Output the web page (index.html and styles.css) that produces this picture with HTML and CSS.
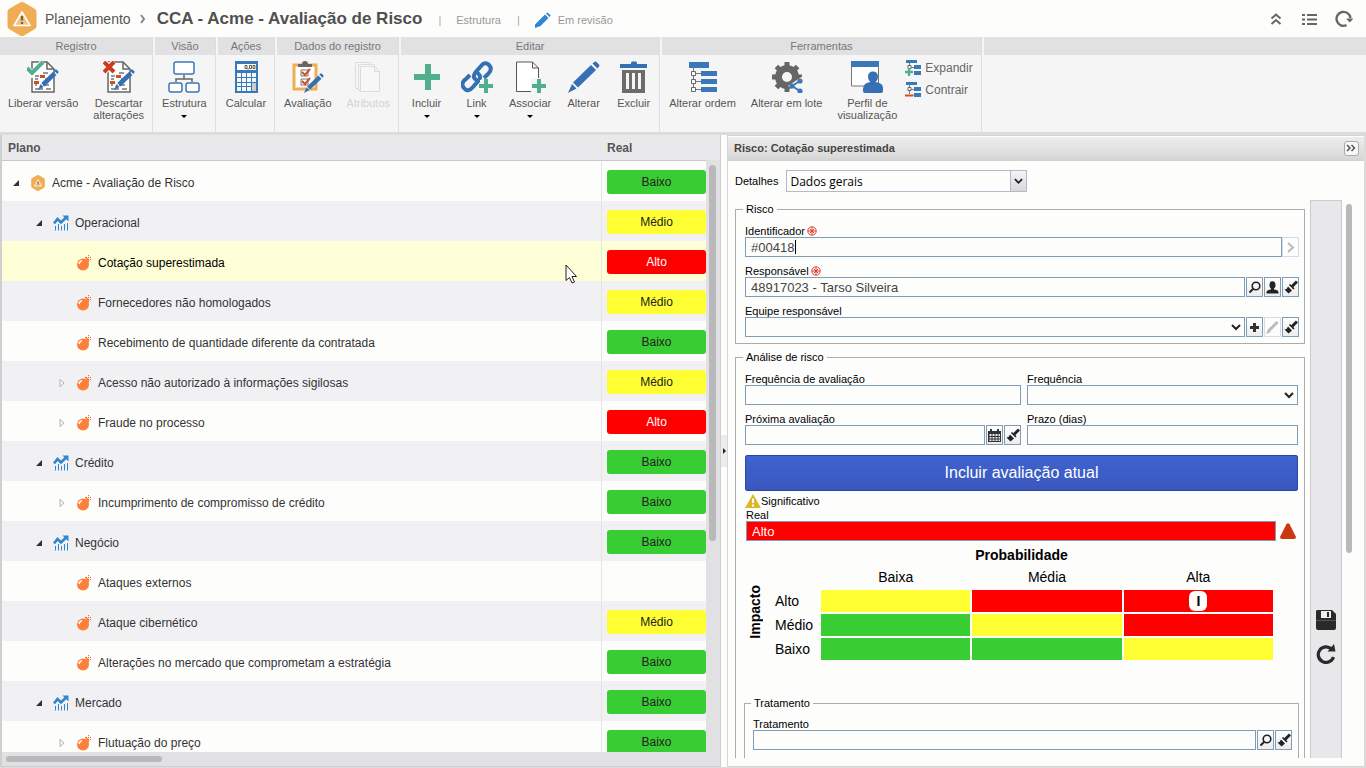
FILE: index.html
```html
<!DOCTYPE html>
<html lang="pt-BR">
<head>
<meta charset="utf-8">
<title>CCA - Acme - Avaliação de Risco</title>
<link rel="stylesheet" href="styles.css">
</head>
<body>
<svg class="defs" aria-hidden="true">
  <symbol id="hex" viewBox="0 0 30 34"><path d="M13 .6Q15 -.4 17 .6L28 7Q29.500 8 29.500 10V24Q29.500 26 28 27L17 33.400Q15 34.400 13 33.400L2 27Q.5 26 .5 24V10Q.5 8 2 7Z" fill="#efae55"/><path d="M15 10 23 23.500H7Z" fill="#f3c27e" stroke="#fff" stroke-width="1.600" stroke-linejoin="round"/><path d="M15 14v4.500M15 20v2" stroke="#7b6230" stroke-width="2.200"/></symbol>
  <symbol id="chart" viewBox="0 0 16 16"><path d="M1 8.500 4.500 4 8 7.500 13 2.500" fill="none" stroke="#2f86d0" stroke-width="2.600"/><path d="M9.500 .5H15.500V6.500Z" fill="#2f86d0"/><path d="M2.500 11v4.500M5.500 9v6.500M8.500 11v4.500M11.500 9v6.500M14.500 8v7.500" stroke="#2f86d0"/></symbol>
  <symbol id="bomb" viewBox="0 0 16 16"><circle cx="7" cy="9.500" r="6" fill="#ff7f3a"/><path d="M9 3.500 12 3 13.500 5 12.500 8Z" fill="#ff7f3a"/><path d="M9 2.500H11M12 2.500H13M14 2.500H15M12.500 0v1M14 4.500h1" fill="none" stroke="#f0642c"/><path d="M3 9Q3.500 6.300 6 5.800" fill="none" stroke="#fff" stroke-width="1.500"/></symbol>
  <symbol id="open" viewBox="0 0 8 8"><path d="M7 1V7H1Z" fill="#333"/></symbol>
  <symbol id="closed" viewBox="0 0 8 10"><path d="M2 1.500 6 5 2 8.500Z" fill="#fff" stroke="#b0b0b0"/></symbol>
  <symbol id="pencil" viewBox="0 0 32 32"><path d="M23 4 28 9 10 26.500 5 21.500Z" fill="#356fb4"/><path d="M4 23 8.500 27.500 0 32Z" fill="#356fb4"/><path d="M24.500 2.500 26.500 .8Q27.500 0 28.500 1L31 3.500Q32 4.500 31 5.500L29.500 7.500Z" fill="#356fb4"/></symbol>
  <symbol id="doc" viewBox="0 0 32 32"><path d="M4 1h14l7 7v23H3V1Z" fill="#fff" stroke="#666" stroke-width="1.500"/><path d="M18 1v7h7" fill="none" stroke="#666" stroke-width="1.500"/><path d="M6 15h4M6 18h3M16 18h4M6 24h2M14 12h5M6 28h8M14 24h6M17 28h5" stroke="#777" stroke-width="1.500"/><path d="M11 14h5v3h-5zM5 20h5v3H5z" fill="#d2501f"/></symbol>
  <symbol id="plus" viewBox="0 0 14 14"><path d="M5 0h4v5h5v4H9v5H5V9H0V5h5Z" fill="#51b08c"/></symbol>
  <symbol id="nodes" viewBox="0 0 32 32"><path d="M2 1h20v6H2zM14 10h16v5H14zM14 18h16v5H14zM14 26h16v5H14z" fill="#3a78b8"/><path d="M6.500 7v4M6.500 14v5M6.500 22v5M8 12.500h6M8 20.500h6M8 28.500h6" stroke="#777"/><path d="M4.500 10.500h4v4h-4zM4.500 18.500h4v4h-4zM4.500 26.500h4v4h-4z" fill="#fff" stroke="#666"/></symbol>
  <symbol id="mini" viewBox="0 0 16 16"><path d="M1 0h11v3H1zM9 5h7v4H9zM9 11h7v4H9z" fill="#3a78b8"/><path d="M4.500 3v3M6 7.500h3M4.500 9v4M6 13h3" stroke="#777"/><path d="M3 5.500h3v3H3z" fill="#fff" stroke="#666"/></symbol>
  <symbol id="mag" viewBox="0 0 15 15"><circle cx="9" cy="6" r="3.800" fill="none" stroke="#222" stroke-width="1.600"/><path d="M6.500 8.500 2.500 12.500" stroke="#222" stroke-width="2"/></symbol>
  <symbol id="brush" viewBox="0 0 15 15"><path d="M14 1.500 9 6.500" stroke="#222" stroke-width="3"/><path d="M6.500 4.500 11 9" stroke="#222" stroke-width="1.600"/><path d="M5 6.500 9 10.500 5.500 13.500 1.500 9.500 3.500 9Z" fill="#222"/></symbol>
  <symbol id="user" viewBox="0 0 15 15"><ellipse cx="7.500" cy="5" rx="3" ry="3.800" fill="#222"/><path d="M1.500 13.500Q1 10 5.500 9.500L7.500 10 9.500 9.500Q14 10 13.500 13.500Z" fill="#222"/><path d="M6 7h3v3H6z" fill="#222"/></symbol>
  <symbol id="req" viewBox="0 0 10 10"><circle cx="5" cy="5" r="4.200" fill="#fff" stroke="#e23b2e"/><path d="M5 1v8M1 5h8M3 3l4 4M7 3 3 7" stroke="#e23b2e"/></symbol>
  <symbol id="chev" viewBox="0 0 10 8"><path d="M1 2 5 6 9 2" fill="none" stroke="#222" stroke-width="2"/></symbol>
  <symbol id="down" viewBox="0 0 6 4"><path d="M0 0h6L3 3Z" fill="#000"/></symbol>
</svg>

<header class="top">
  <svg class="logo"><use href="#hex"/></svg>
  <a class="crumb" href="#">Planejamento</a>
  <svg class="sep" viewBox="0 0 6 10"><path d="M1 1 4 5 1 9" fill="none" stroke="#888" stroke-width="2"/></svg>
  <h1 class="title">CCA - Acme - Avaliação de Risco</h1>
  <span class="bar">|</span>
  <span class="meta">Estrutura</span>
  <span class="bar">|</span>
  <svg class="edit" viewBox="0 0 32 32"><path d="M20 5 27 12 11 28 0 32V25Z" fill="#2f86d0"/><path d="M22 3 25 .8 31.500 7 29 10Z" fill="#2f86d0"/></svg>
  <span class="meta">Em revisão</span>
  <div class="tools">
    <button aria-label="Recolher"><svg viewBox="0 0 18 18"><path d="M4.500 8.500 9 4.500 13.500 8.500M4.500 14 9 10 13.500 14" fill="none" stroke="#666" stroke-width="2"/></svg></button>
    <button aria-label="Lista"><svg viewBox="0 0 18 18"><path d="M1 5h3M1 9.500h3M1 14h3M6 5h10M6 9.500h10M6 14h10" stroke="#666" stroke-width="2"/></svg></button>
    <button aria-label="Atualizar"><svg viewBox="0 0 18 18"><path d="M11.500 15.200A7 7 0 1 1 15.500 8" fill="none" stroke="#666" stroke-width="2.400"/><path d="M11 8.500h7.500L14.800 12.500Z" fill="#666"/></svg></button>
  </div>
</header>

<nav class="ribbon">
  <section class="group">
    <h2>Registro</h2>
    <div class="cmds">
      <button><svg viewBox="0 0 32 32"><use href="#doc" x="2"/><path d="M0 7 5 13 16 1" fill="none" stroke="#fff" stroke-width="6"/><path d="M0 7 5 12 16 1" fill="none" stroke="#51b08c" stroke-width="4"/><use href="#pencil" x="11" y="8" width="21" height="21"/></svg><span>Liberar versão</span></button>
      <button><svg viewBox="0 0 32 32"><use href="#doc" x="2"/><path d="M1 1 11 11M11 1 1 11" stroke="#fff" stroke-width="6"/><path d="M1 1 11 11M11 1 1 11" stroke="#cc3b1c" stroke-width="4"/><use href="#pencil" x="11" y="8" width="21" height="21"/></svg><span>Descartar<br>alterações</span></button>
    </div>
  </section>
  <section class="group">
    <h2>Visão</h2>
    <div class="cmds">
      <button><svg viewBox="0 0 32 32"><path d="M16 14v4M8 21v-3h16v3" fill="none" stroke="#666" stroke-width="1.500"/><g fill="#fff" stroke="#3a78b8" stroke-width="1.500"><rect x="6" y="1" width="20" height="12" rx="2"/><rect x="1" y="22" width="13" height="9" rx="2"/><rect x="18" y="22" width="13" height="9" rx="2"/></g></svg><span>Estrutura</span><svg class="drop"><use href="#down"/></svg></button>
    </div>
  </section>
  <section class="group">
    <h2>Ações</h2>
    <div class="cmds">
      <button><svg viewBox="0 0 32 32"><path d="M5 0h23v32H5z" fill="#3a78b8"/><path d="M7 3h19v6H7z" fill="#fff"/><path d="M15 4.500h2v3h-2zM19.500 4.500h2v3h-2zM23 4.500h2v3h-2zM18 7v1.500" fill="none" stroke="#333" stroke-width=".8"/><path d="M7 12h4v4H7zM12 12h4v4h-4zM17 12h4v4h-4zM7 17h4v4H7zM12 17h4v4h-4zM17 17h4v4h-4zM7 22h4v3H7zM12 22h4v3h-4zM17 22h4v3h-4zM7 26h4v4H7zM12 26h4v4h-4zM17 26h4v4h-4zM22 12h4v4h-4zM22 17h4v4h-4z" fill="#f5f8fb"/><path d="M22 22h4v8h-4z" fill="#c9cdd2"/></svg><span>Calcular</span></button>
    </div>
  </section>
  <section class="group">
    <h2>Dados do registro</h2>
    <div class="cmds">
      <button><svg viewBox="0 0 32 32"><path d="M2 4h22v24H2z" fill="#fff" stroke="#efae55" stroke-width="3"/><path d="M6 3h4Q10 0 13 0t3 3h4v3H6z" fill="#666"/><path d="M9 9h7v6H9zM9 18h7v6H9z" fill="none" stroke="#777"/><path d="M10 11 13 14 18 8M10 20 13 23 18 17" fill="none" stroke="#d2501f" stroke-width="2"/><use href="#pencil" x="12" y="12" width="20" height="20"/></svg><span>Avaliação</span></button>
      <button disabled><svg viewBox="0 0 32 32" fill="#f7f7f7" stroke="#ddd"><path d="M3.500 1.500h15v26h-15z"/><path d="M6.500 3.500h16v26h-16z"/><path d="M8.500 5.500h14l5 5v20h-19zM22.500 5.500v5h5"/></svg><span>Atributos</span></button>
    </div>
  </section>
  <section class="group">
    <h2>Editar</h2>
    <div class="cmds">
      <button><svg viewBox="0 0 32 32"><path d="M14 3h6v10h9v6h-9v10h-6V19H3v-6h11z" fill="#51b08c"/></svg><span>Incluir</span><svg class="drop"><use href="#down"/></svg></button>
      <button><svg viewBox="0 0 32 32"><g fill="none" stroke="#356fb4" stroke-width="4"><path d="M16 19.500Q11 17 14 12L20 5Q24 0 28 4T27 13L23 17"/><path d="M15 11Q21 14 18 19L12 26Q7 32 3 27T5 18L9 14"/></g><path d="M19 19h10v10H19z" fill="#f5f5f5"/><use href="#plus" x="18" y="18" width="14" height="14"/></svg><span>Link</span><svg class="drop"><use href="#down"/></svg></button>
      <button><svg viewBox="0 0 32 32"><path d="M2.500 1h16l6 6v23.500h-22zM18.500 1v6h6" fill="#fff" stroke="#555"/><path d="M17 17h15v15H17z" fill="#f5f5f5"/><use href="#plus" x="18" y="18" width="14" height="14"/></svg><span>Associar</span><svg class="drop"><use href="#down"/></svg></button>
      <button><svg viewBox="0 0 32 32"><use href="#pencil"/></svg><span>Alterar</span></button>
      <button><svg viewBox="0 0 32 32"><path d="M2 3h11V2q0-1.500 1.500-1.500h3Q19 .5 19 2v1h10v4H2z" fill="#356fb4"/><path d="M4 9h23v23H4z" fill="#6c6c6c"/><path d="M8 12h3v16H8zM14 12h3v16h-3zM20 12h3v16h-3z" fill="#f5f5f5"/></svg><span>Excluir</span></button>
    </div>
  </section>
  <section class="group">
    <h2>Ferramentas</h2>
    <div class="cmds">
      <button><svg><use href="#nodes"/></svg><span>Alterar ordem</span></button>
      <button><svg viewBox="0 0 32 32"><circle cx="16" cy="16" r="8.500" fill="none" stroke="#666" stroke-width="7"/><path d="M16 1v6M16 25v6M1 16h6M25 16h6M5.400 5.400l4 4M5.400 26.600l4-4M26.600 5.400l-4 4" stroke="#666" stroke-width="5"/><path d="M32 15 17 25 32 33z" fill="#f5f5f5"/><path d="M29 20 21 25 29 30" fill="none" stroke="#3a78b8" stroke-width="2"/><circle cx="29" cy="20" r="2.600" fill="#3a78b8"/><circle cx="21" cy="25" r="2.600" fill="#3a78b8"/><circle cx="29" cy="30" r="2.600" fill="#3a78b8"/></svg><span>Alterar em lote</span></button>
      <button><svg viewBox="0 0 32 32"><path d="M.5 1h27v24H.5z" fill="#fff" stroke="#777"/><path d="M0 0h28v6H0z" fill="#3a78b8"/><path d="M17 16q0-5.500 5-5.500t5 5.500q0 3-2.500 5 7.500 1 7.500 6v3q0 2-2 2H14q-2 0-2-2v-2q0-6 7.500-7-2.500-2-2.500-5z" fill="#356fb4"/></svg><span>Perfil de<br>visualização</span></button>
      <div class="stack">
        <button><svg viewBox="0 0 16 16"><use href="#mini"/><path d="M0 9h9v7H0z" fill="#f5f5f5"/><use href="#plus" x="0" y="8" width="8" height="8"/></svg>Expandir</button>
        <button><svg viewBox="0 0 16 16"><use href="#mini"/><path d="M0 12h8v4H0z" fill="#f5f5f5"/><path d="M0 12.500h8v2H0z" fill="#d2501f"/></svg>Contrair</button>
      </div>
    </div>
  </section>
  <section class="group rest"><h2></h2></section>
</nav>

<main class="work">
  <section class="plan">
    <div class="scroller">
      <table class="tree">
        <thead><tr><th scope="col">Plano</th><th scope="col" class="real">Real</th></tr></thead>
        <tbody>
          <tr><td><div class="node l0"><svg class="tw"><use href="#open"/></svg><svg class="ic"><use href="#hex"/></svg>Acme - Avaliação de Risco</div></td><td><span class="tag low">Baixo</span></td></tr>
          <tr><td><div class="node l1"><svg class="tw"><use href="#open"/></svg><svg class="ic"><use href="#chart"/></svg>Operacional</div></td><td><span class="tag mid">Médio</span></td></tr>
          <tr class="current"><td><div class="node l2"><i class="tw"></i><svg class="ic"><use href="#bomb"/></svg>Cotação superestimada</div></td><td><span class="tag high">Alto</span></td></tr>
          <tr><td><div class="node l2"><i class="tw"></i><svg class="ic"><use href="#bomb"/></svg>Fornecedores não homologados</div></td><td><span class="tag mid">Médio</span></td></tr>
          <tr><td><div class="node l2"><i class="tw"></i><svg class="ic"><use href="#bomb"/></svg>Recebimento de quantidade diferente da contratada</div></td><td><span class="tag low">Baixo</span></td></tr>
          <tr><td><div class="node l2"><svg class="tw"><use href="#closed"/></svg><svg class="ic"><use href="#bomb"/></svg>Acesso não autorizado à informações sigilosas</div></td><td><span class="tag mid">Médio</span></td></tr>
          <tr><td><div class="node l2"><svg class="tw"><use href="#closed"/></svg><svg class="ic"><use href="#bomb"/></svg>Fraude no processo</div></td><td><span class="tag high">Alto</span></td></tr>
          <tr><td><div class="node l1"><svg class="tw"><use href="#open"/></svg><svg class="ic"><use href="#chart"/></svg>Crédito</div></td><td><span class="tag low">Baixo</span></td></tr>
          <tr><td><div class="node l2"><svg class="tw"><use href="#closed"/></svg><svg class="ic"><use href="#bomb"/></svg>Incumprimento de compromisso de crédito</div></td><td><span class="tag low">Baixo</span></td></tr>
          <tr><td><div class="node l1"><svg class="tw"><use href="#open"/></svg><svg class="ic"><use href="#chart"/></svg>Negócio</div></td><td><span class="tag low">Baixo</span></td></tr>
          <tr><td><div class="node l2"><i class="tw"></i><svg class="ic"><use href="#bomb"/></svg>Ataques externos</div></td><td></td></tr>
          <tr><td><div class="node l2"><i class="tw"></i><svg class="ic"><use href="#bomb"/></svg>Ataque cibernético</div></td><td><span class="tag mid">Médio</span></td></tr>
          <tr><td><div class="node l2"><i class="tw"></i><svg class="ic"><use href="#bomb"/></svg>Alterações no mercado que comprometam a estratégia</div></td><td><span class="tag low">Baixo</span></td></tr>
          <tr><td><div class="node l1"><svg class="tw"><use href="#open"/></svg><svg class="ic"><use href="#chart"/></svg>Mercado</div></td><td><span class="tag low">Baixo</span></td></tr>
          <tr><td><div class="node l2"><svg class="tw"><use href="#closed"/></svg><svg class="ic"><use href="#bomb"/></svg>Flutuação do preço</div></td><td><span class="tag low">Baixo</span></td></tr>
        </tbody>
      </table>
    </div>
    <div class="vtrack"><div class="vthumb"></div></div>
    <div class="htrack"><div class="hthumb"></div></div>
    <svg class="cursor" viewBox="0 0 12 20"><path d="M1 1V16.500L4.500 13.500 7 19 9.500 18 7 12.500H11.500Z" fill="#fff" stroke="#222"/></svg>
  </section>

  <div class="split"><button aria-label="Recolher painel"><svg viewBox="0 0 4 6"><path d="M0 0 3 3 0 6Z" fill="#222"/></svg></button></div>

  <section class="detail">
    <div class="dhead"><h2>Risco: Cotação superestimada</h2><button aria-label="Ocultar"><svg viewBox="0 0 12 12"><path d="M2 3 5 6 2 9M6.500 3 9.500 6 6.500 9" fill="none" stroke="#555" stroke-width="1.500"/></svg></button></div>
    <div class="pick"><label for="sec">Detalhes</label><span class="sel combo"><select id="sec"><option>Dados gerais</option></select><svg><use href="#chev"/></svg></span></div>
    <div class="dbody">
      <form class="form">
        <fieldset>
          <legend>Risco</legend>
          <div class="field"><label for="ident">Identificador <svg class="req"><use href="#req"/></svg></label>
            <div class="line caret"><input id="ident" value="#00418"><button type="button" class="mini off flush" aria-label="Avançar"><svg viewBox="0 0 15 15"><path d="M5 3 10 7.500 5 12" fill="none" stroke="#bbb" stroke-width="2"/></svg></button></div></div>
          <div class="field"><label for="resp">Responsável <svg class="req"><use href="#req"/></svg></label>
            <div class="line"><input id="resp" value="48917023 - Tarso Silveira"><button type="button" class="mini" aria-label="Pesquisar"><svg><use href="#mag"/></svg></button><button type="button" class="mini" aria-label="Usuário"><svg><use href="#user"/></svg></button><button type="button" class="mini" aria-label="Limpar"><svg><use href="#brush"/></svg></button></div></div>
          <div class="field"><label for="team">Equipe responsável</label>
            <div class="line"><span class="sel"><select id="team"><option></option></select><svg><use href="#chev"/></svg></span><button type="button" class="mini" aria-label="Incluir"><svg viewBox="0 0 15 15"><path d="M7.500 3v9M3 7.500h9" stroke="#333" stroke-width="3"/></svg></button><button type="button" class="mini off" aria-label="Editar"><svg viewBox="0 0 15 15"><path d="M12.500 2 4 10.500" stroke="#bbb" stroke-width="3"/><path d="M3 9 6 12 1 14Z" fill="#bbb"/></svg></button><button type="button" class="mini" aria-label="Limpar"><svg><use href="#brush"/></svg></button></div></div>
        </fieldset>
        <fieldset>
          <legend>Análise de risco</legend>
          <div class="pair">
            <div class="field"><label for="fa">Frequência de avaliação</label><div class="line"><input id="fa"></div></div>
            <div class="field"><label for="fr">Frequência</label><div class="line"><span class="sel"><select id="fr"><option></option></select><svg><use href="#chev"/></svg></span></div></div>
            <div class="field"><label for="pa">Próxima avaliação</label><div class="line"><input id="pa"><button type="button" class="mini" aria-label="Calendário"><svg viewBox="0 0 15 15"><path d="M1 3h13v11H1z" fill="#333"/><path d="M2.500 6h2v2h-2zM5.500 6h2v2h-2zM8.500 6h2v2h-2zM11.500 6h1.500v2h-1.500zM2.500 9h2v1.500h-2zM5.500 9h2v1.500h-2zM8.500 9h2v1.500h-2zM11.500 9h1.500v1.500h-1.500zM2.500 11.500h2V13h-2zM5.500 11.500h2V13h-2zM8.500 11.500h2V13h-2zM11.500 11.500h1.500V13h-1.500z" fill="#eee"/><path d="M4 1v3M11 1v3" stroke="#333" stroke-width="2"/></svg></button><button type="button" class="mini" aria-label="Limpar"><svg><use href="#brush"/></svg></button></div></div>
            <div class="field"><label for="pz">Prazo (dias)</label><div class="line"><input id="pz"></div></div>
          </div>
          <button type="button" class="primary">Incluir avaliação atual</button>
          <div class="sig"><svg viewBox="0 0 16 14"><path d="M8 0 16 14H0Z" fill="#dbb928"/><path d="M8 4.500v4.500M8 10.500v2" stroke="#fff" stroke-width="2"/></svg>Significativo</div>
          <div class="realfield"><label for="rl">Real</label><div class="line"><input id="rl" class="alert" value="Alto" readonly><svg viewBox="0 0 16 16"><path d="M6.500 1Q8 -.6 9.500 1L16 14Q16 16 14 16H2Q0 16 0 14Z" fill="#cc3812"/></svg></div></div>
          <div class="axis">Probabilidade</div>
          <table class="matrix">
            <colgroup><col class="c0"><col class="c1"><col><col><col></colgroup>
            <tr><th rowspan="4" class="vert"><span>Impacto</span></th><td></td><th scope="col">Baixa</th><th scope="col">Média</th><th scope="col">Alta</th></tr>
            <tr><th scope="row">Alto</th><td class="mid"></td><td class="high"></td><td class="high"><span class="mark">I</span></td></tr>
            <tr><th scope="row">Médio</th><td class="low"></td><td class="mid"></td><td class="high"></td></tr>
            <tr><th scope="row">Baixo</th><td class="low"></td><td class="low"></td><td class="mid"></td></tr>
          </table>
          <fieldset class="inner">
            <legend>Tratamento</legend>
            <div class="field"><label for="tr">Tratamento</label><div class="line"><input id="tr"><button type="button" class="mini" aria-label="Pesquisar"><svg><use href="#mag"/></svg></button><button type="button" class="mini" aria-label="Limpar"><svg><use href="#brush"/></svg></button></div></div>
          </fieldset>
        </fieldset>
      </form>
      <aside class="side">
        <button aria-label="Salvar"><svg viewBox="0 0 20 20"><path d="M1 0h15l4 4v14q0 2-2 2H2q-2 0-2-2V1z" fill="#2a2a2a"/><path d="M5 1h10v7H5z" fill="#eee"/><path d="M11 2h2v5h-2z" fill="#2a2a2a"/><path d="M0 10.500h20" stroke="#555"/></svg></button>
        <button aria-label="Recarregar"><svg viewBox="0 0 20 20"><path d="M15.500 5A7.800 7.800 0 1 0 17.500 13" fill="none" stroke="#2a2a2a" stroke-width="3.200"/><path d="M11.500 7.500H19.500L18 0Z" fill="#2a2a2a"/></svg></button>
      </aside>
      <div class="dtrack"><div class="dthumb"></div></div>
    </div>
  </section>
</main>
</body>
</html>
```
FILE: styles.css
```css
* { box-sizing: border-box; }
body {
  margin: 0;
  height: 100vh;
  display: flex;
  flex-direction: column;
  overflow: hidden;
  font: 11px/12px "Liberation Sans", Arial, sans-serif;
  color: #000;
  background: #dcdcda;
}
h1, h2 { margin: 0; }
button, input, select { font: inherit; margin: 0; border-radius: 0; }
button { padding: 0; border: 0; background: none; color: inherit; cursor: pointer; }
svg { flex: none; display: block; }
.defs { position: absolute; width: 0; height: 0; }

/* Title bar */
.top { display: flex; align-items: center; height: 37px; padding: 0 13px 0 7px; background: #fdfdfc; color: #555; }
.logo { width: 30px; height: 34px; }
.crumb { margin-left: 8px; font-size: 14px; line-height: 18px; color: #555; text-decoration: none; }
.sep { width: 6px; height: 10px; margin: 0 11px 0 9px; }
.title { font-size: 17px; line-height: 20px; color: #505050; }
.bar { margin: 2px 15px 0 16px; color: #aaa; }
.meta { margin-top: 2px; color: #999; }
.edit { width: 16px; height: 16px; margin-top: 2px; margin-right: 7px; }
.tools { display: flex; gap: 16px; margin-left: auto; }
.tools svg { width: 18px; height: 18px; }

/* Ribbon */
.ribbon { display: flex; gap: 2px; height: 95px; background: #f5f5f5; }
.group { border-right: 1px solid #dedee0; }
.group h2 { height: 18px; line-height: 18px; font-size: 11px; font-weight: normal; text-align: center; color: #777; background: #e1e1e3; }
.rest { flex: 1; border: 0; }
.cmds { display: flex; align-items: flex-start; padding-top: 6px; }
.group:nth-child(odd) .cmds { padding-left: 1px; }
.cmds > button { display: flex; flex-direction: column; align-items: center; min-width: 50px; padding: 0 8px 0 7px; color: #555; }
.cmds > button > svg { width: 32px; height: 32px; margin-bottom: 4px; }
.cmds > button > .drop { width: 6px; height: 4px; margin: 6px 0 0; }
.cmds > button:disabled { color: #d4d4d4; }
.stack { display: flex; flex-direction: column; gap: 6px; margin-top: -1px; padding-right: 8px; }
.stack button { display: flex; align-items: center; gap: 4px; font-size: 12px; line-height: 16px; color: #666; }
.stack svg { width: 16px; height: 16px; }

/* Work area */
.work { flex: 1; min-height: 0; display: grid; grid-template: minmax(0, 1fr) / 721fr 6px 639fr; padding: 3px 0 1px; }
.plan { position: relative; display: grid; grid-template: minmax(0, 1fr) 14px / minmax(0, 1fr) 14px; border: solid #cfcfcf; border-width: 0 1px 1px 2px; background: linear-gradient(#e9e9eb 25px, #e1e1e3 25px); }
.scroller { overflow: hidden; }
.tree { width: 100%; table-layout: fixed; border-collapse: separate; border-spacing: 0; font-size: 12px; line-height: 14px; }
.tree th { height: 26px; padding: 0 6px; text-align: left; color: #555; background: #e9e9eb; border-bottom: 1px solid #c9c9c9; }
.tree .real { width: 105px; }
.tree td { height: 40px; padding: 0; background: #fdfdfc; color: #333; }
.tree td:last-child { border-left: 1px solid #e4e4e6; padding: 0 0 0 5px; }
.tree tr:nth-child(even) td { background: #f1f1f4; }
.tree .current td { background: #feffd6; color: #000; }
.node { display: flex; align-items: center; padding-top: 3px; }
.l0 { padding-left: 10px; }
.l1 { padding-left: 33px; }
.l2 { padding-left: 56px; }
.tw { width: 8px; height: 10px; margin-right: 10px; }
.ic { width: 16px; height: 16px; margin-right: 6px; }
.tag { display: block; height: 24px; line-height: 24px; border-radius: 3px; text-align: center; margin-top: 1px; color: #222; }
.low { background: #37cd33; }
.mid { background: #fffe33; }
.high { background: #fe0000; }
.tag.high { color: #fff; }
.vtrack { padding: 30px 4px 0 3px; }
.vthumb { height: 64%; border-radius: 4px; background: #b9b9bb; }
.htrack { grid-column: 1 / 3; padding: 4px; background: #e1e1e3; }
.hthumb { width: 22%; height: 6px; border-radius: 3px; background: #b9b9bb; }
.cursor { position: absolute; left: 563px; top: 129px; width: 12px; height: 20px; }
.split { display: flex; align-items: center; background: #fdfdfc; }
.split button { height: 32px; width: 6px; background: #ececec; }
.split svg { width: 4px; height: 6px; margin-left: 2px; }

/* Detail panel */
.detail { display: flex; flex-direction: column; min-width: 0; min-height: 0; margin-right: 2px; border: solid #d5d5d5; border-width: 1px 0 1px 1px; background: #fdfdfc; }
.dhead { display: flex; align-items: center; justify-content: space-between; height: 25px; flex: none; padding: 0 5px 2px 6px; border-top: 1px solid #fff; background: linear-gradient(#ededed, #dcdcdc 75%, #d2d2d2); }
.dhead h2 { font-size: 11px; color: #444; }
.dhead button { width: 15px; height: 15px; border: 1px solid #aaa; border-radius: 3px; background: #f8f8f8; }
.dhead svg { width: 12px; height: 12px; }
.pick { display: flex; align-items: center; gap: 8px; padding: 9px 7px 8px; }
.sel { position: relative; flex: 1; display: flex; }
.sel select { width: 100%; height: 20px; appearance: none; border: 1px solid #7f9db9; background: #fdfdfc; padding: 0 6px; }
.sel svg { position: absolute; right: 4px; top: 6px; width: 10px; height: 8px; pointer-events: none; }
.combo { flex: 0 0 241px; }
.combo select { height: 22px; padding: 0 3px; font: 12px "Open Sans", sans-serif; border-color: #b5b8c8; }
.combo svg { right: 1px; top: 1px; width: 16px; height: 20px; padding: 6px 3px; border-left: 1px solid #b5b8c8; background: linear-gradient(#f6f6f6, #d8d8d8); }
.dbody { flex: 1; min-height: 0; display: flex; margin-bottom: 8px; padding-left: 7px; overflow: hidden; }
.form { flex: 1; min-width: 0; padding-top: 2px; overflow: hidden; }
fieldset { display: flex; flex-direction: column; gap: 8px; margin: 0 0 6px; padding: 9px 5px 6px 9px; border: 1px solid #aaacae; min-width: 0; }
legend { margin-left: -2px; padding: 0 3px; line-height: 14px; }
.field label, .realfield label { display: flex; align-items: center; gap: 2px; height: 12px; line-height: 12px; }
.req { width: 10px; height: 10px; }
.line { position: relative; display: flex; gap: 1px; }
.line input { flex: 1; min-width: 0; height: 20px; padding: 0 5px; border: 1px solid #7f9db9; background: #fdfdfc; font-size: 13px; color: #444; }
.caret::after { content: ""; position: absolute; left: 50px; top: 3px; width: 1px; height: 14px; background: #000; }
.mini { width: 17px; height: 20px; border: 1px solid #7f9db9; background: linear-gradient(#fff, #ececec); }
.mini svg { width: 15px; height: 15px; }
.off { border-color: #d3dde7; background: #fdfdfc; }
.flush { margin-left: -1px; }
.pair { display: grid; grid-template-columns: 276fr 271fr; gap: 8px 6px; margin-right: 1px; }
.primary { height: 36px; margin: 2px 1px 0 0; border: 1px solid #2c46a8; border-radius: 2px; background: linear-gradient(#3f63d0, #3a57bd); font-size: 16px; color: #fff; }
.sig { display: flex; align-items: center; margin-top: -6px; height: 16px; }
.sig svg { width: 16px; height: 14px; }
.realfield { margin-top: -8px; padding: 0 3px 0 1px; }
.realfield .line { gap: 4px; align-items: center; }
.realfield svg { width: 16px; height: 16px; }
.line .alert { background: #fe0000; color: #fff; }
.axis { text-align: center; font-size: 14px; line-height: 16px; font-weight: bold; margin: -2px 1px 0 0; }
.matrix { width: calc(100% - 24px); margin-top: -7px; table-layout: fixed; border-spacing: 2px; font-size: 14px; line-height: 16px; }
.matrix .c0 { width: 16px; }
.matrix .c1 { width: 54px; }
.matrix th, .matrix td { height: 22px; padding: 0; font-weight: normal; text-align: center; }
.matrix th[scope="row"] { text-align: left; padding-left: 10px; }
.matrix .vert { font-weight: bold; }
.vert span { display: inline-block; writing-mode: vertical-rl; transform: rotate(180deg); }
.mark { display: block; width: 18px; height: 20px; margin: 0 auto; border-radius: 6px; background: #fff; font-weight: bold; line-height: 20px; }
.inner { margin: 26px 0 0 -1px; padding: 8px 6px 20px 8px; }
.side { display: flex; flex-direction: column; align-items: center; justify-content: flex-end; gap: 14px; width: 32px; margin-left: 5px; padding-bottom: 94px; border: 1px solid #cbcbcd; border-bottom: 0; background: #e8e8ea; }
.side button, .side svg { width: 20px; height: 20px; }
.dtrack { width: 22px; padding: 4px 12px 0 4px; }
.dthumb { height: 63%; border-radius: 3px; background: #b9b9bb; }
```
